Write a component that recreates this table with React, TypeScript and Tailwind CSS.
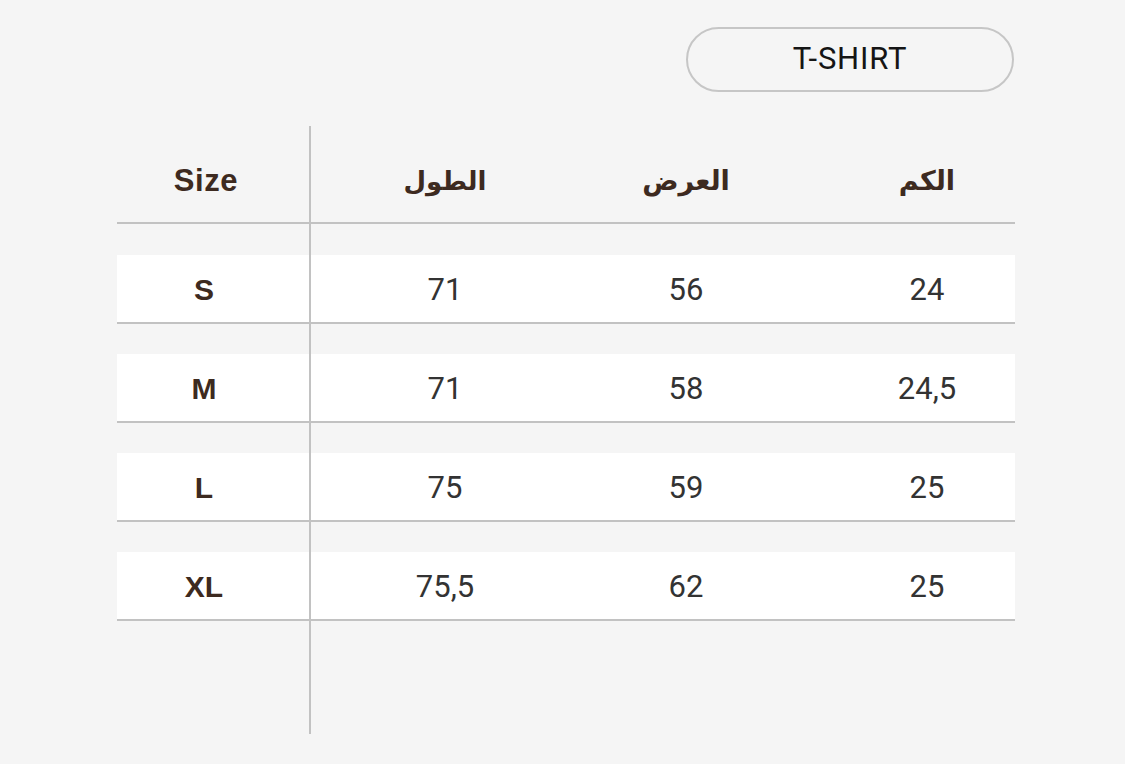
import React from 'react';

const rows = [
  { size: 'S', length: '71', width: '56', sleeve: '24' },
  { size: 'M', length: '71', width: '58', sleeve: '24,5' },
  { size: 'L', length: '75', width: '59', sleeve: '25' },
  { size: 'XL', length: '75,5', width: '62', sleeve: '25' },
];

// left spacer keeps the vertical divider running through the gaps
const Gap = ({ h }: { h: string }) => (
  <div className={`flex ${h}`}>
    <div className="w-[194px] border-r-2 border-[#c2c2c2]" />
  </div>
);

const App = () => {
  return (
    <div className="w-[1125px] h-[764px] bg-[#f5f5f5] overflow-hidden">
      <div className="w-[898px] ml-[117px] pt-[27px]">
        <div className="flex justify-end">
          <div className="w-[328px] h-[65px] mr-[1px] rounded-full border-2 border-[#c6c6c6] flex items-center justify-center text-[31px] text-[#151515] tracking-[0.8px] font-['Roboto',sans-serif]">
            T-SHIRT
          </div>
        </div>

        <div className="mt-[34px] text-[#3d2a20]">
          {/* header */}
          <div className="flex h-[98px] border-b-2 border-[#c2c2c2] items-start font-bold">
            <div className="w-[194px] h-full border-r-2 border-[#c2c2c2] pr-[14px] pt-[37px] text-center text-[31px] leading-9 tracking-[0.6px] font-['Liberation_Sans',sans-serif]">
              Size
            </div>
            <div
              dir="rtl"
              className="w-[268px] pt-[37px] text-center text-[26px] leading-9 font-['Liberation_Sans','DejaVu_Sans',sans-serif]"
            >
              الطول
            </div>
            <div
              dir="rtl"
              className="w-[214px] pt-[37px] text-center text-[27px] leading-9 font-['Liberation_Sans','DejaVu_Sans',sans-serif]"
            >
              العرض
            </div>
            <div
              dir="rtl"
              className="w-[222px] pl-[46px] pt-[37px] text-center text-[27px] leading-9 font-['Liberation_Sans','DejaVu_Sans',sans-serif]"
            >
              الكم
            </div>
          </div>

          <Gap h="h-[31px]" />

          {rows.map((r, i) => (
            <React.Fragment key={r.size}>
              <div className="flex h-[69px] bg-white border-b-2 border-[#c2c2c2]">
                <div className="w-[194px] border-r-2 border-[#c2c2c2] pr-[18px] pt-[2px] flex items-center justify-center text-[30px] font-bold font-['Liberation_Sans',sans-serif]">
                  {r.size}
                </div>
                <div className="w-[268px] pt-[3px] flex items-center justify-center text-[31px] text-[#333333] font-['Roboto',sans-serif]">
                  {r.length}
                </div>
                <div className="w-[214px] pt-[3px] flex items-center justify-center text-[31px] text-[#333333] font-['Roboto',sans-serif]">
                  {r.width}
                </div>
                <div className="w-[222px] pl-[46px] pt-[3px] flex items-center justify-center text-[31px] text-[#333333] font-['Roboto',sans-serif]">
                  {r.sleeve}
                </div>
              </div>
              {i < rows.length - 1 && <Gap h="h-[30px]" />}
            </React.Fragment>
          ))}

          <Gap h="h-[113px]" />
        </div>
      </div>
    </div>
  );
};

export default App;
